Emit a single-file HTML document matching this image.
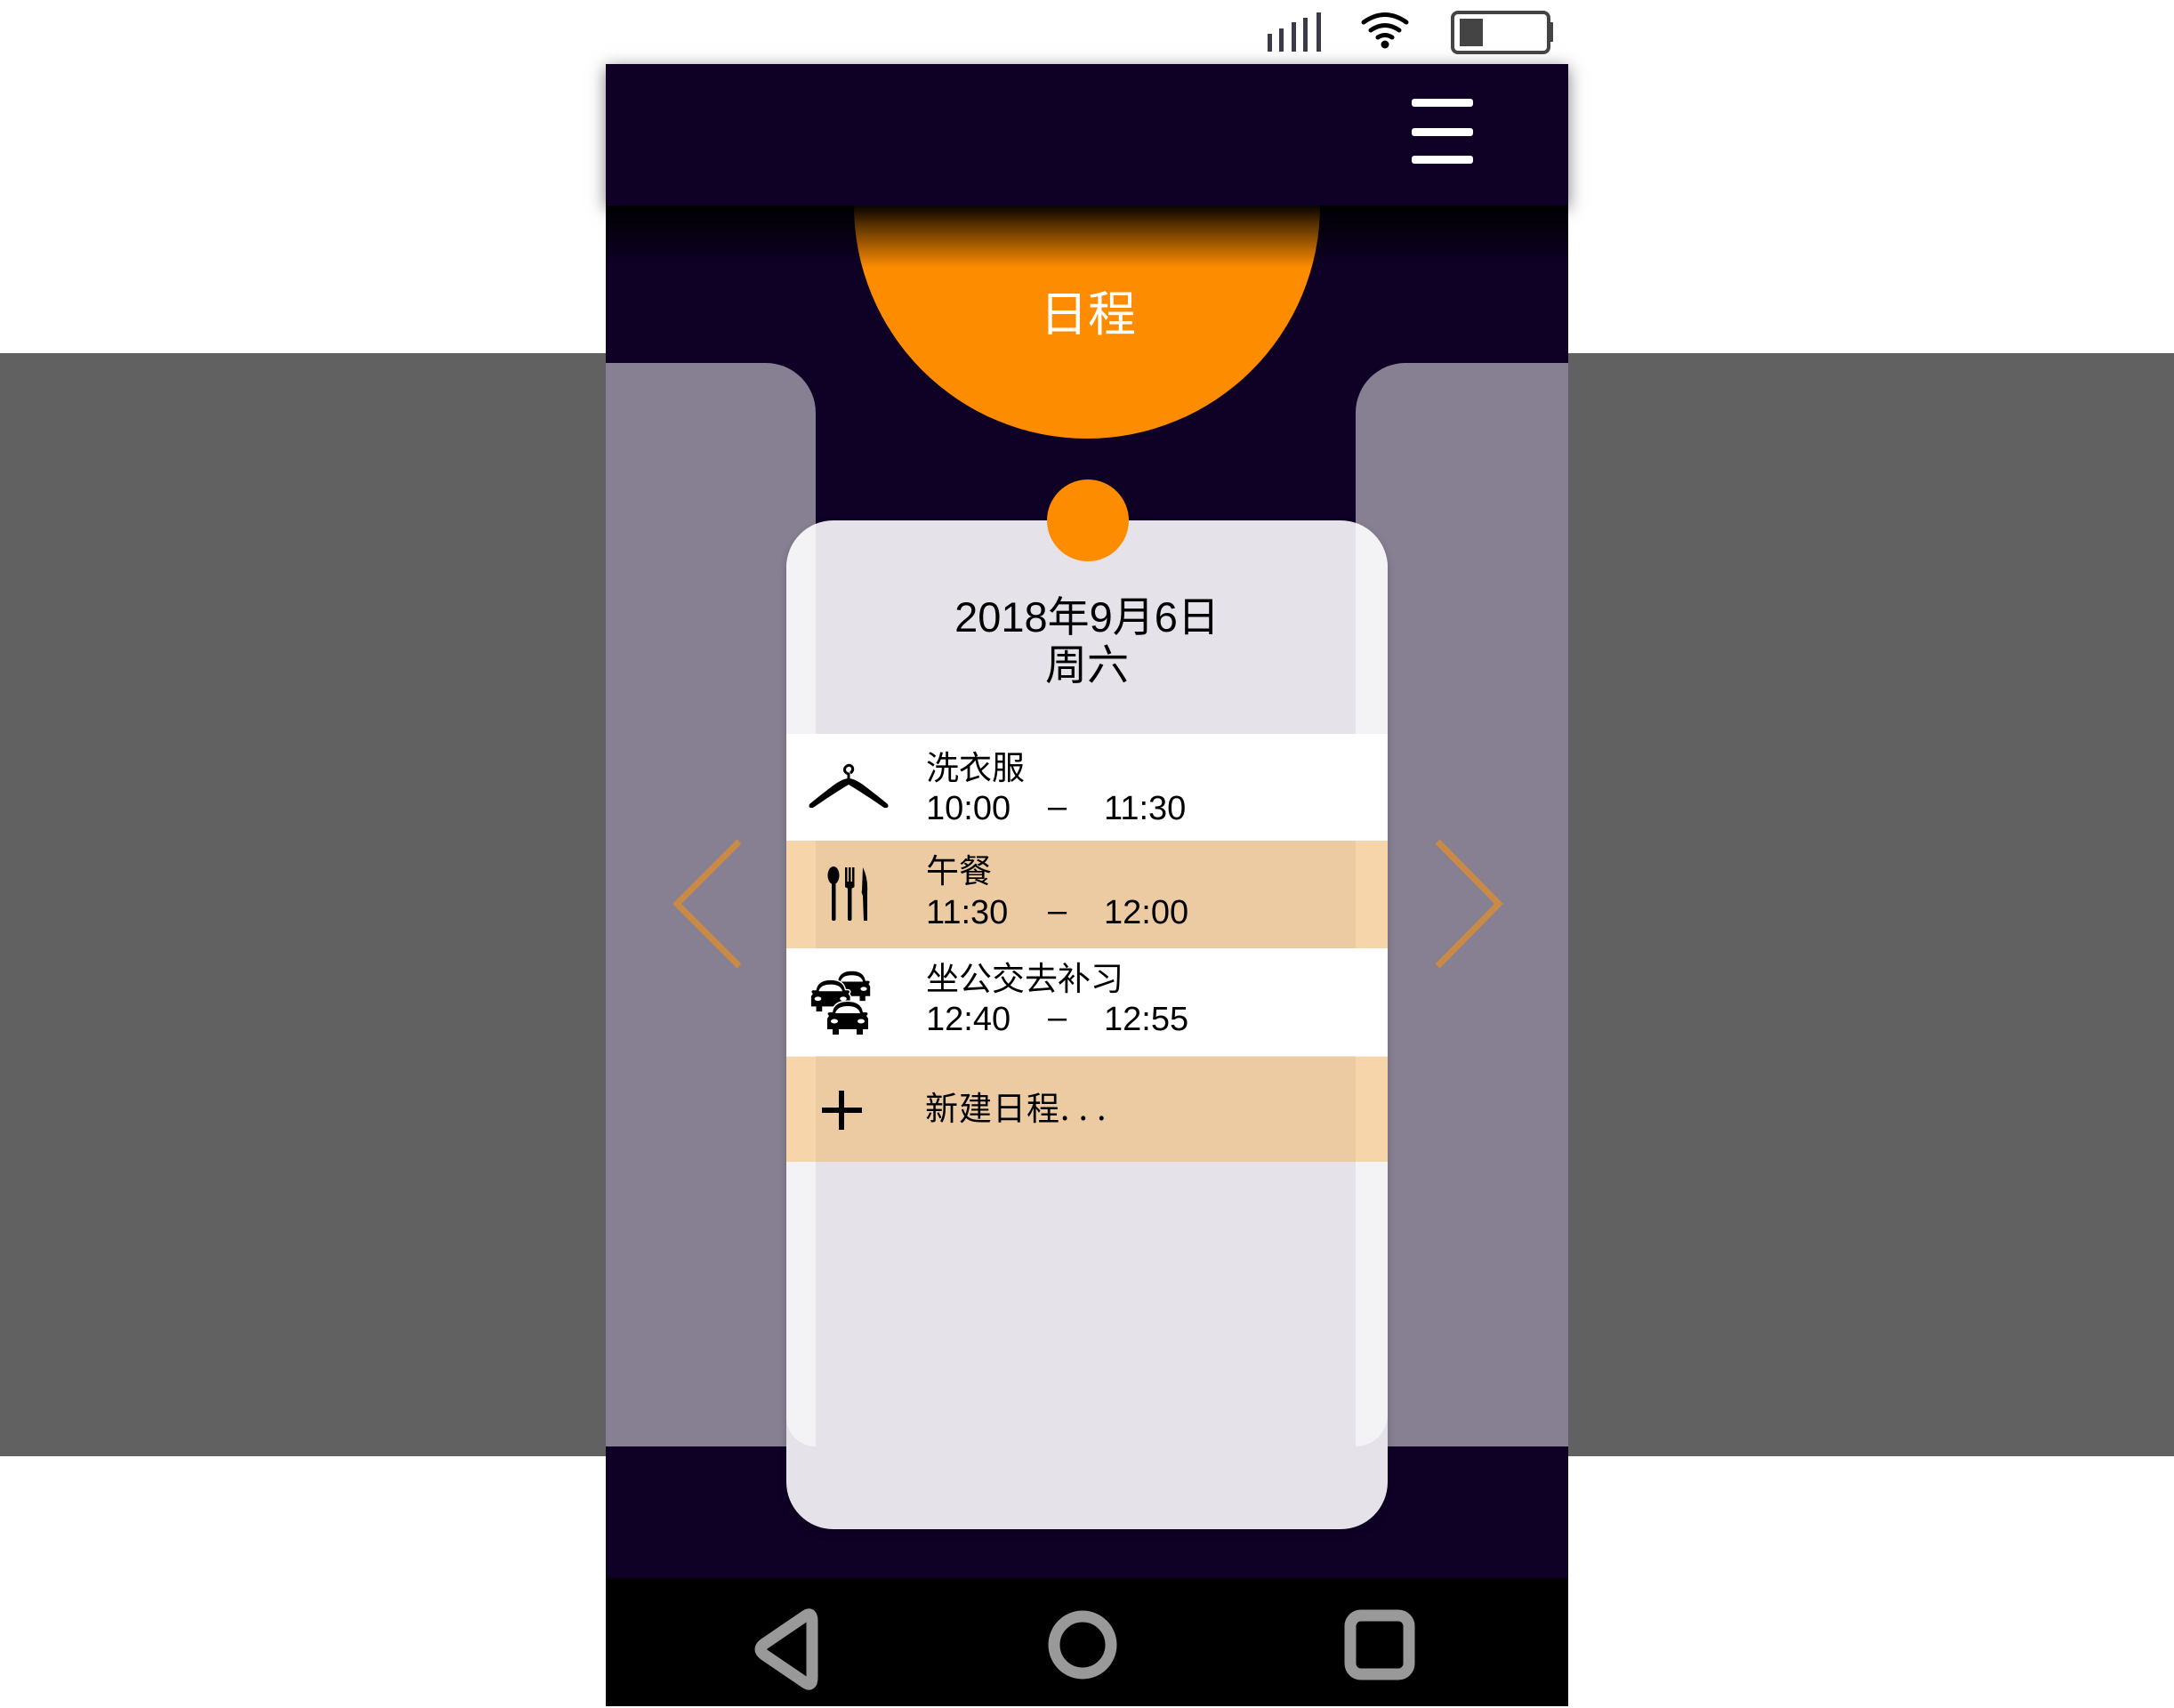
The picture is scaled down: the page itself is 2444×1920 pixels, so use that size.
<!DOCTYPE html>
<html><head><meta charset="utf-8"><style>
*{margin:0;padding:0;box-sizing:border-box}
body{width:2444px;height:1920px;position:relative;background:#fff;overflow:hidden;font-family:"Liberation Sans","Noto Sans CJK SC",sans-serif}
.abs{position:absolute}
.row{position:absolute;left:884px;width:676px;height:121px}
.t{position:absolute;font-size:37px;line-height:1;color:#000;white-space:pre}
.d{position:absolute;font-size:38px;line-height:1;color:#000;white-space:pre}
</style></head><body>
<div class="abs" style="left:0;top:397px;width:2444px;height:1240px;background:#616161"></div>
<div class="abs" style="left:681px;top:72px;width:1082px;height:1702px;background:#0f0026"></div>
<div class="abs" style="left:960px;top:231px;width:524px;height:263px;overflow:hidden"><div style="position:absolute;left:0;top:-262px;width:524px;height:524px;border-radius:50%;background:#fd8c00"></div></div>
<div class="abs" style="left:681px;top:231px;width:1082px;height:70px;background:linear-gradient(#000000f0,#0000)"></div>
<div class="abs" style="left:681px;top:72px;width:1082px;height:159px;background:#0f0026;box-shadow:0 4px 18px rgba(0,0,0,.5)"></div>
<div class="abs" style="left:1169px;top:322px;font-size:54px;color:#fff;font-family:'Noto Sans CJK SC',sans-serif;line-height:1">日程</div>
<div class="abs" style="left:1587px;top:111px;width:69px;height:9px;background:#fff;border-radius:3px"></div>
<div class="abs" style="left:1587px;top:144px;width:69px;height:9px;background:#fff;border-radius:3px"></div>
<div class="abs" style="left:1587px;top:175px;width:69px;height:9px;background:#fff;border-radius:3px"></div>
<svg class="abs" style="left:1400px;top:0" width="360" height="70">
<g fill="#3a3a48"><rect x="25" y="38" width="5" height="20"/><rect x="38" y="32" width="5" height="26"/><rect x="52" y="25" width="5" height="33"/><rect x="65" y="20" width="5" height="38"/><rect x="80" y="14" width="5" height="44"/></g>
<g fill="none" stroke="#000" stroke-width="5" stroke-linecap="round"><path d="M133 25 Q157 8 181 25"/><path d="M141 34 Q157 23 173 34"/><path d="M149 42 Q157 37 165 42"/></g>
<circle cx="157" cy="50" r="4.5" fill="#000"/>
<rect x="233" y="14" width="108" height="45" rx="6" fill="none" stroke="#444" stroke-width="4"/>
<rect x="341" y="25" width="5" height="22" fill="#444"/>
<rect x="241" y="21" width="26" height="31" fill="#444"/>
</svg>
<div class="abs" style="left:681px;top:408px;width:236px;height:1218px;background:#878092;border-radius:0 56px 0 0"></div>
<div class="abs" style="left:1524px;top:408px;width:239px;height:1218px;background:#878092;border-radius:56px 0 0 0"></div>
<div class="abs" style="left:884px;top:585px;width:676px;height:1134px;background:#e5e3e9;border-radius:53px;box-shadow:0 4px 10px rgba(0,0,0,.2)"></div>
<div class="abs" style="left:884px;top:640px;width:33px;height:986px;background:#f3f3f5;border-radius:0 0 0 40px"></div>
<div class="abs" style="left:1524px;top:640px;width:36px;height:986px;background:#f3f3f5;border-radius:0 0 40px 0"></div>
<div class="abs" style="left:884px;top:585px;width:676px;height:60px;border-radius:53px 53px 0 0;overflow:hidden"><div style="position:absolute;left:0;top:0;width:33px;height:60px;background:#f3f3f5"></div><div style="position:absolute;right:0;top:0;width:36px;height:60px;background:#f3f3f5"></div></div>
<div class="abs" style="left:1177px;top:539px;width:92px;height:92px;border-radius:50%;background:#fd8c00"></div>
<div class="abs" style="left:884px;top:667px;width:676px;text-align:center;font-size:47px;line-height:54px;color:#000">2018年9月6日<br>周六</div>

<div class="row" style="top:825px;background:#fff">
<svg class="abs" style="left:24px;top:33px" width="100" height="55"><path d="M46 18 L46 12 Q40 10 42 5 Q46 0 50 4 Q52 8 48 11" fill="none" stroke="#000" stroke-width="3"/><path d="M46 17 Q40 17 30 24 Q14 36 2 46 Q0 51 6 50 Q26 36 46 24 Q66 36 86 50 Q92 51 90 46 Q78 36 62 24 Q52 17 46 17Z" fill="#000"/></svg>
<div class="t" style="left:157px;top:17px;font-family:'Noto Sans CJK SC',sans-serif">洗衣服</div>
<div class="d" style="left:157px;top:65px">10:00</div><div class="d" style="left:294px;top:63px">–</div><div class="d" style="left:357px;top:65px">11:30</div>
</div>
<div class="row" style="top:945px;background:#eccaa2"><div class="abs" style="left:0;top:0;width:33px;height:121px;background:#f6d5aa"></div><div class="abs" style="right:0;top:0;width:36px;height:121px;background:#f6d5aa"></div>
<svg class="abs" style="left:40px;top:28px" width="60" height="64" fill="#000"><ellipse cx="13" cy="11" rx="6.5" ry="10"/><rect x="11" y="18" width="4.5" height="44" rx="2"/><rect x="26" y="2" width="2.5" height="20"/><rect x="30" y="2" width="2.5" height="20"/><rect x="34" y="2" width="2.5" height="20"/><path d="M26 18 h10.5 v6 q-5 4 -10.5 0z"/><rect x="29" y="22" width="4.5" height="40" rx="2"/><path d="M46 2 Q52 14 51 30 L51 62 L47 62 L46 34 Q44 30 45 28 Z"/></svg>
<div class="t" style="left:157px;top:13px;font-family:'Noto Sans CJK SC',sans-serif">午餐</div>
<div class="d" style="left:157px;top:62px">11:30</div><div class="d" style="left:294px;top:60px">–</div><div class="d" style="left:357px;top:62px">12:00</div>
</div>
<div class="row" style="top:1066px;background:#fff">
<svg class="abs" style="left:26px;top:22px" width="80" height="82">
<defs><g id="car"><path d="M8 14 Q10 2 25 2 Q40 2 42 14 L46 14 Q49 15 46 18 L48 21 V33 H42 V39 H35 V33 H15 V39 H8 V33 H2 V21 L4 18 Q1 15 4 14 Z" fill="#000" stroke="#fff" stroke-width="3" paint-order="stroke"/><path d="M11 15 Q13 7 25 7 Q37 7 39 15 Z" fill="#fff"/><ellipse cx="10" cy="24" rx="4" ry="2.5" fill="#fff"/><ellipse cx="40" cy="24" rx="4" ry="2.5" fill="#fff"/></g></defs>
<use href="#car" transform="translate(25,2) scale(0.9)"/>
<use href="#car" transform="translate(0,12) scale(0.95)"/>
<use href="#car" transform="translate(18,36) scale(1)"/>
</svg>
<div class="t" style="left:157px;top:13px;font-family:'Noto Sans CJK SC',sans-serif">坐公交去补习</div>
<div class="d" style="left:157px;top:61px">12:40</div><div class="d" style="left:294px;top:59px">–</div><div class="d" style="left:357px;top:61px">12:55</div>
</div>
<div class="row" style="top:1188px;height:118px;background:#eccaa2"><div class="abs" style="left:0;top:0;width:33px;height:118px;background:#f6d5aa"></div><div class="abs" style="right:0;top:0;width:36px;height:118px;background:#f6d5aa"></div>
<div class="abs" style="left:40px;top:57px;width:45px;height:6px;background:#000"></div>
<div class="abs" style="left:59px;top:38px;width:6px;height:44px;background:#000"></div>
<div class="t" style="left:156px;top:37px;font-family:'Noto Sans CJK SC',sans-serif;letter-spacing:1px">新建日程. . .</div>
</div>
<svg class="abs" style="left:740px;top:930px" width="980" height="170"><g fill="none" stroke="#c98a45" stroke-width="7"><path d="M91 16 L21 86 L91 156"/><path d="M876 16 L945 86 L876 156"/></g></svg>
<div class="abs" style="left:681px;top:1774px;width:1082px;height:144px;background:#000"></div>
<svg class="abs" style="left:681px;top:1774px" width="1082" height="144" fill="none" stroke="#999" stroke-width="13" stroke-linejoin="round"><path d="M225 42 L178 74 Q170 80 178 86 L225 118 Q232 122 232 112 L232 48 Q232 38 225 42Z"/><circle cx="536" cy="75" r="32"/><rect x="837" y="42" width="66" height="66" rx="12"/></svg>
</body></html>
